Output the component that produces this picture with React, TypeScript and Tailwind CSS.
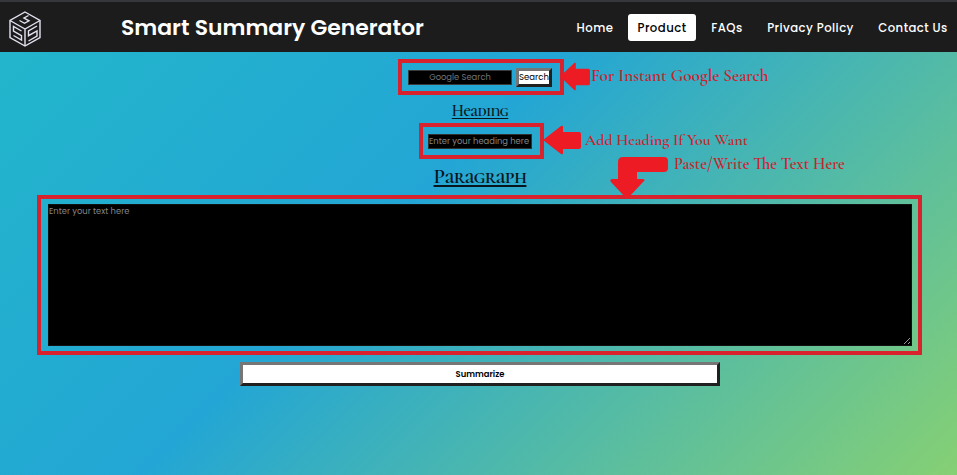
import React from "react";

const sans = "font-['Poppins','Inter',sans-serif]";
const note =
  "absolute whitespace-nowrap font-['Cormorant_Garamond','Liberation_Serif',serif] font-semibold leading-[20px] text-[#cc222c]";
const unicase =
  "font-['Cormorant_Unicase','IM_Fell_English_SC','Liberation_Serif',serif] font-semibold text-[#08151c] underline underline-offset-2";

function Logo() {
  return (
    <svg className="ml-[9px] h-[36px] w-[32px] shrink-0" viewBox="0 0 32 36" fill="none" stroke="#e4e2f0" strokeWidth="1.4">
      <path d="M16 1 31 9.5V26.5L16 35 1 26.5V9.5Z" />
      <path d="M1 9.5 16 18 31 9.5M16 18V35" />
      <path d="M19.5 4.5 15 7 20 9.8 15.5 12.3 10.5 9.5" />
      <path d="M12.5 20 4.5 15.5V20L12.5 24.7V29L4.5 24.5" />
      <path d="M28 15 19.5 20V24.7L28 20V25L19.5 30" />
    </svg>
  );
}

function NavItem({ label, className }: { label: string; className: string }) {
  return (
    <a className={`flex h-[27px] items-center justify-center whitespace-nowrap rounded-[3px] pt-[2px] text-[11.7px] font-medium tracking-[0.45px] ${className}`}>
      {label}
    </a>
  );
}

function LeftArrow({ className }: { className: string }) {
  return (
    <svg className={`absolute ${className}`} viewBox="0 0 38 30" preserveAspectRatio="none" fill="#ed1c24">
      <path d="M0 15 18 1Q20 0 20 2V7H36Q38 7 38 9V22Q38 24 36 24H20V28Q20 30 18 29Z" />
    </svg>
  );
}

export default function App() {
  return (
    <div className={`flex h-[475px] w-[957px] flex-col overflow-hidden bg-[linear-gradient(135deg,#22b7ca_0%,#23a6d5_43%,#86d074_100%)] ${sans}`}>
      <header className="flex h-[52px] shrink-0 items-center border-t-2 border-[#36363d] bg-[#1c1c1c] text-white">
        <div className="mt-[4px] w-[121px] shrink-0">
          <Logo />
        </div>
        <h1 className="mt-[3px] w-[455px] shrink-0 whitespace-nowrap text-[21.9px] font-semibold">Smart Summary Generator</h1>
        <nav className="mt-px flex shrink-0 items-center">
          <NavItem label="Home" className="ml-[0.5px] w-[37px]" />
          <NavItem label="Product" className="ml-[14.5px] w-[68px] bg-white text-black" />
          <NavItem label="FAQs" className="ml-[15px] w-[32px]" />
          <NavItem label="Privacy Policy" className="ml-[24px] w-[87px]" />
          <NavItem label="Contact Us" className="ml-[24px] w-[70px]" />
        </nav>
      </header>

      <main className="flex w-full flex-col items-center">
        <div className="relative mt-[7px] mr-[-5px] flex h-[36px] w-[166px] items-center gap-[4px] border-4 border-[#d8232e] pl-[6px]">
          <input placeholder="Google Search" className="h-[15px] w-[104px] border border-[#3b3b3b] bg-black text-center text-[8.4px] placeholder:text-[#757575]" />
          <button className="flex h-[19px] w-[36px] items-center justify-center border-[3px] border-t-[#767676] border-r-[#202020] border-b-[#202020] border-l-[#767676] bg-white pt-px text-[8.5px] text-black">Search</button>
          <LeftArrow className="top-[-1px] left-[158px] h-[29px] w-[30px]" />
          <span className={`${note} top-[3px] left-[189px] text-[17.2px]`}>For Instant Google Search</span>
        </div>

        <h2 className={`mt-[5px] mr-[-3px] h-[23px] text-[16px] leading-[23px] tracking-[-0.4px] ${unicase}`}>Heading</h2>

        <div className="relative mr-[-6px] flex h-[36px] w-[125px] items-center border-4 border-[#d8232e] pt-px pl-[5px]">
          <input placeholder="Enter your heading here" className="h-[15px] w-[104px] border border-[#303030] bg-black text-[8.4px] placeholder:text-[#858585]" />
          <LeftArrow className="top-[-2px] left-[120px] h-[30px] w-[38px]" />
          <span className={`${note} top-[3px] left-[162px] text-[15.9px]`}>Add Heading If You Want</span>
        </div>

        <h2 className={`mt-[3px] mr-[-3px] h-[30px] text-[21px] leading-[30px] tracking-[-0.7px] ${unicase}`}>Paragraph</h2>

        <div className="relative mt-[3px] mr-[-2px] h-[160px] w-[885px] border-4 border-[#d8232e] pt-[5px] pl-[7px]">
          <textarea placeholder="Enter your text here" className="block h-[142px] w-[864px] resize border border-[#111] bg-black text-[8.4px] leading-[12px] placeholder:text-[#858585]" />
          <svg className="absolute top-[-42px] left-[569px] h-[41px] w-[58px]" viewBox="0 0 58 41" fill="#ed1c24">
            <path d="M13 0H54Q58 0 58 4V11Q58 15 54 15H27V22H33Q36 23 33 25L19 40Q17 42 15 40L1 25Q-1 22 3 22H8V5Q8 0 13 0Z" />
          </svg>
          <span className={`${note} top-[-45px] left-[633px] text-[16.3px]`}>Paste/Write The Text Here</span>
        </div>

        <button className="mt-[7px] mr-[-3px] h-[24px] w-[480px] border-[3px] border-t-[#767676] border-r-[#202020] border-b-[#202020] border-l-[#767676] bg-white text-[8.4px] leading-none font-semibold text-black">Summarize</button>
      </main>
    </div>
  );
}
